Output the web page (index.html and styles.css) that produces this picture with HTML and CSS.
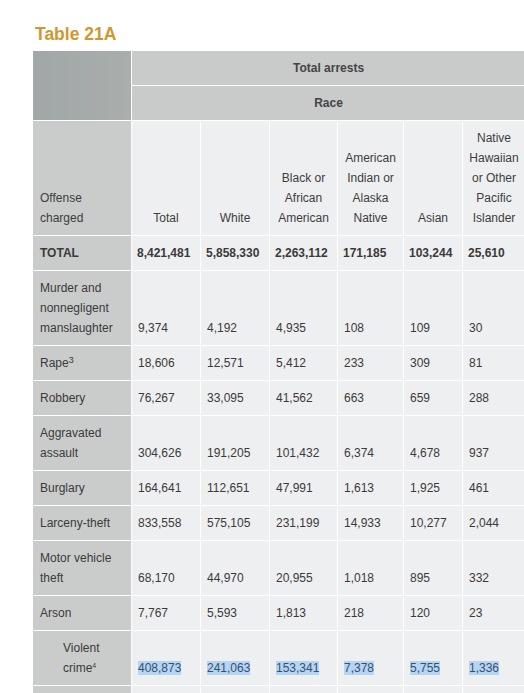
FILE: index.html
```html
<!DOCTYPE html>
<html>
<head>
<meta charset="utf-8">
<link rel="stylesheet" href="styles.css">
</head>
<body>
<h2 class="title">Table 21A</h2>
<table class="arrests">
  <colgroup>
    <col class="c-off"><col class="c-total"><col class="c-white"><col class="c-black"><col class="c-amind"><col class="c-asian"><col class="c-nhpi">
  </colgroup>
  <thead>
    <tr class="top">
      <th class="corner" rowspan="2"></th>
      <th class="group" colspan="6">Total arrests</th>
    </tr>
    <tr class="top">
      <th class="group" colspan="6">Race</th>
    </tr>
    <tr class="labels">
      <th class="off-label">Offense charged</th>
      <th>Total</th>
      <th>White</th>
      <th>Black or African American</th>
      <th>American Indian or Alaska Native</th>
      <th>Asian</th>
      <th>Native Hawaiian or Other Pacific Islander</th>
    </tr>
  </thead>
  <tbody>
    <tr class="total">
      <th>TOTAL</th>
      <td>8,421,481</td><td>5,858,330</td><td>2,263,112</td><td>171,185</td><td>103,244</td><td>25,610</td>
    </tr>
    <tr>
      <th>Murder and nonnegligent manslaughter</th>
      <td>9,374</td><td>4,192</td><td>4,935</td><td>108</td><td>109</td><td>30</td>
    </tr>
    <tr>
      <th>Rape<sup>3</sup></th>
      <td>18,606</td><td>12,571</td><td>5,412</td><td>233</td><td>309</td><td>81</td>
    </tr>
    <tr>
      <th>Robbery</th>
      <td>76,267</td><td>33,095</td><td>41,562</td><td>663</td><td>659</td><td>288</td>
    </tr>
    <tr>
      <th>Aggravated assault</th>
      <td>304,626</td><td>191,205</td><td>101,432</td><td>6,374</td><td>4,678</td><td>937</td>
    </tr>
    <tr>
      <th>Burglary</th>
      <td>164,641</td><td>112,651</td><td>47,991</td><td>1,613</td><td>1,925</td><td>461</td>
    </tr>
    <tr>
      <th>Larceny-theft</th>
      <td>833,558</td><td>575,105</td><td>231,199</td><td>14,933</td><td>10,277</td><td>2,044</td>
    </tr>
    <tr>
      <th>Motor vehicle theft</th>
      <td>68,170</td><td>44,970</td><td>20,955</td><td>1,018</td><td>895</td><td>332</td>
    </tr>
    <tr>
      <th>Arson</th>
      <td>7,767</td><td>5,593</td><td>1,813</td><td>218</td><td>120</td><td>23</td>
    </tr>
    <tr class="sub">
      <th>Violent crime<sup class="small">4</sup></th>
      <td><span class="sel">408,873</span></td><td><span class="sel">241,063</span></td><td><span class="sel">153,341</span></td><td><span class="sel">7,378</span></td><td><span class="sel">5,755</span></td><td><span class="sel">1,336</span></td>
    </tr>
    <tr class="sub">
      <th>Property crime<sup class="small">4</sup></th>
      <td>1,066,715</td><td>733,726</td><td>301,158</td><td>17,782</td><td>12,917</td><td>2,830</td>
    </tr>
  </tbody>
</table>
</body>
</html>
```

FILE: styles.css
```css
html, body {
  overflow: hidden;
}
body {
  margin: 0;
  background: #ffffff;
  font-family: "Liberation Sans", Arial, sans-serif;
  color: #3a3a3a;
}
.title {
  margin: 24px 0 6px 35px;
  font-size: 17.5px;
  line-height: 20px;
  font-weight: bold;
  color: #d3962f;
}
.arrests {
  margin-left: 32px;
  width: 493px;
  table-layout: fixed;
  border-collapse: collapse;
  font-size: 12px;
  line-height: 20px;
}
.c-off { width: 99px; }
.c-total { width: 69px; }
.c-white { width: 69px; }
.c-black { width: 68px; }
.c-amind { width: 66px; }
.c-asian { width: 59px; }
.c-nhpi { width: 63px; }

.arrests th,
.arrests td {
  border: 1px solid #ffffff;
  padding: 7px 6px 7px 6px;
  vertical-align: bottom;
  text-align: left;
  font-weight: normal;
}
.arrests td {
  background: #eeeff0;
}
.arrests tbody th {
  background: #cacccb;
  padding-left: 7px;
}
.top th {
  padding-top: 7px;
  padding-bottom: 7px;
}
.corner {
  background: linear-gradient(90deg, #a1a7a6, #a9aead);
}
.group {
  background: #c9cbcb;
  font-weight: bold !important;
  text-align: center !important;
  vertical-align: middle !important;
  color: #444;
}
.labels th {
  background: #eeeff0;
  text-align: center;
  color: #3d3d3d;
}
.labels .off-label {
  background: #cacccb;
  text-align: left;
  padding-left: 7px;
}
.total th,
.total td {
  font-weight: bold;
}
.total td {
  padding-left: 5px;
}
sup {
  font-size: 9px;
  line-height: 0;
  vertical-align: 4px;
}
sup.small {
  font-size: 7px;
}
.sub th {
  padding-left: 30px !important;
}
.sel {
  background: #b6d4f4;
  color: #35506f;
}
```
